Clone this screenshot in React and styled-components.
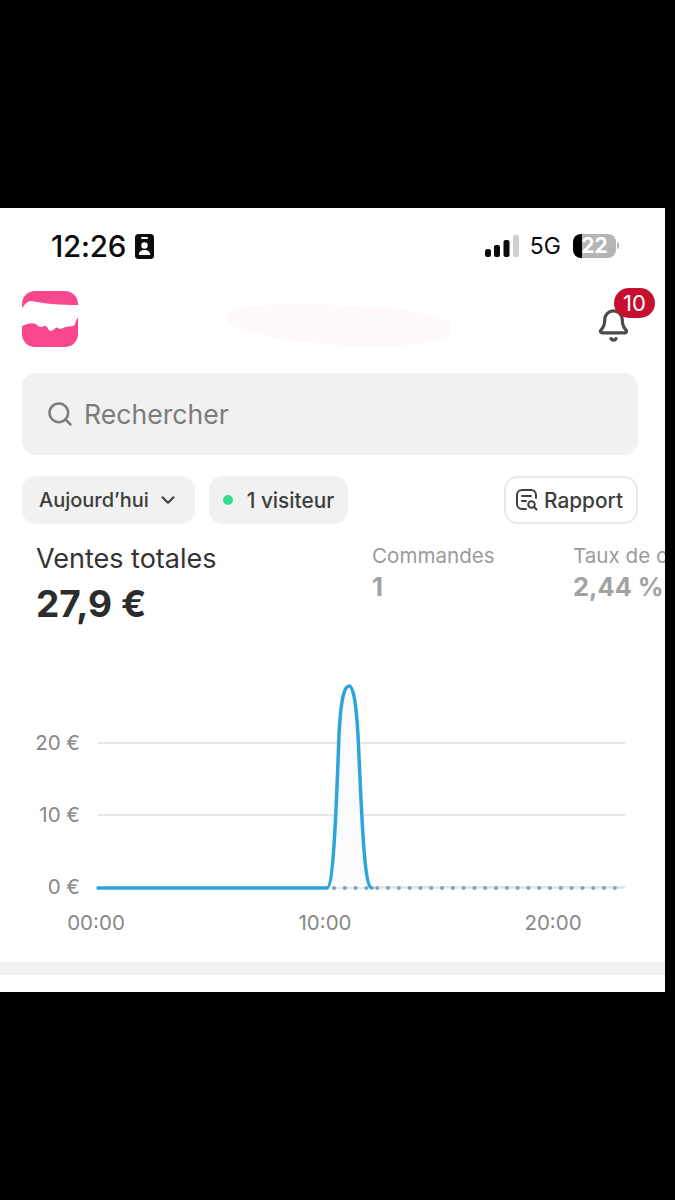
import React from 'react';
import styled, { createGlobalStyle } from 'styled-components';
import { Bell, ChevronDown, Search } from 'lucide-react';

const GlobalStyle = createGlobalStyle`
  html, body {
    margin: 0;
    padding: 0;
    background: #000;
    font-family: Inter, "Liberation Sans", sans-serif;
  }
`;

const Page = styled.div`
  width: 675px;
  height: 1200px;
  padding-top: 208px;
  box-sizing: border-box;
  background: #000;
  overflow: hidden;
`;

const Screen = styled.main`
  width: 665px;
  height: 784px;
  background: #fff;
  overflow: hidden;
`;

const StatusBar = styled.div`
  height: 76px;
  padding: 0 49px 0 51px;
  display: flex;
  align-items: center;
  justify-content: space-between;
  color: #0b0b0b;
`;

const StatusGroup = styled.div`
  display: flex;
  align-items: center;
  gap: ${(p) => p.$gap}px;
`;

const Clock = styled.span`
  font-size: 29.5px;
  font-weight: 500;
  letter-spacing: -0.2px;
`;

const Network = styled.span`
  font-size: 23px;
  font-weight: 400;
  margin-right: 1px;
`;

const Battery = styled.div`
  position: relative;
  width: 43px;
  height: 24px;
  border-radius: 8px;
  background: linear-gradient(to right, #000 9px, #b5b5b5 9px);
  color: #fff;
  font-size: 21px;
  font-weight: 700;
  line-height: 24px;
  text-align: center;

  &::after {
    content: '';
    position: absolute;
    top: 8px;
    right: -3px;
    width: 2px;
    height: 7px;
    border-radius: 0 2px 2px 0;
    background: #b5b5b5;
  }
`;

const Header = styled.header`
  height: 89px;
  padding: 7px 10px 0 22px;
  box-sizing: border-box;
  display: flex;
  align-items: flex-start;
  justify-content: space-between;
`;

const Smudge = styled.div`
  width: 226px;
  height: 40px;
  margin: 14px 0 0 2px;
  background: #fff8f9;
  border-radius: 50% 40% 50% 60%;
  transform: rotate(3deg);
`;

const BellWrap = styled.div`
  position: relative;
  width: 62px;
  height: 52px;
  padding-left: 3px;
  color: #4a4a4a;
  display: flex;
  align-items: flex-end;
  box-sizing: border-box;
`;

const Badge = styled.span`
  position: absolute;
  top: -3px;
  right: 0;
  width: 41px;
  height: 30px;
  border-radius: 15px;
  background: #c5112f;
  color: #fff;
  font-size: 22px;
  line-height: 30px;
  text-align: center;
`;

const SearchBar = styled.div`
  height: 82px;
  margin: 0 27px 0 22px;
  padding-left: 24px;
  border-radius: 14px;
  background: #f1f1f1;
  color: #7b7b7b;
  display: flex;
  align-items: center;
  gap: 10px;
  font-size: 26.6px;
`;

const Filters = styled.div`
  margin: 21px 27px 0 22px;
  display: flex;
  align-items: stretch;
  gap: 14px;
  height: 48px;
`;

const Chip = styled.div`
  padding: 0 ${(p) => p.$right}px 0 ${(p) => p.$left}px;
  border-radius: 14px;
  box-sizing: border-box;
  background: ${(p) => (p.$outlined ? '#fff' : '#f1f1f1')};
  border: ${(p) => (p.$outlined ? '2px solid #e9e9e9' : 'none')};
  margin-left: ${(p) => (p.$push ? 'auto' : 0)};
  color: #3d3d3d;
  font-size: ${(p) => p.$size || 20}px;
  font-weight: 500;
  display: flex;
  align-items: center;
  gap: ${(p) => p.$gap}px;
`;

const Dot = styled.span`
  width: 10px;
  height: 10px;
  border-radius: 50%;
  background: #35dd8b;
`;

const Metrics = styled.section`
  height: 136px;
  padding: 20px 0 0 36px;
  box-sizing: border-box;
  display: flex;
  align-items: flex-start;
`;

const MainMetric = styled.div`
  width: 336px;
  flex: none;
`;

const MainLabel = styled.div`
  font-size: 27px;
  line-height: 30px;
  color: #333;
`;

const MainValue = styled.div`
  margin-top: 8px;
  font-size: 37px;
  line-height: 44px;
  font-weight: 700;
  color: #2c2c2c;
`;

const SideMetric = styled.div`
  width: 201px;
  flex: none;
  white-space: nowrap;
`;

const SideLabel = styled.div`
  font-size: 20.6px;
  line-height: 24px;
  color: #9b9b9b;
`;

const SideValue = styled.div`
  margin-top: 3px;
  font-size: 25.4px;
  line-height: 32px;
  font-weight: 700;
  color: #a2a2a2;
`;

const Chart = styled.svg`
  display: block;
  width: 665px;
  height: 302px;

  text {
    font-family: Inter, "Liberation Sans", sans-serif;
    font-size: 20.500px;
    fill: #878787;
  }
`;

const Divider = styled.div`
  height: 13px;
  background: #f1f1f1;
`;

const IdIcon = () => (
  <svg width="19" height="25" viewBox="0 0 19 25">
    <rect width="19" height="25" rx="3.5" fill="#0b0b0b" />
    <rect x="6" y="3" width="7" height="2" rx="1" fill="#fff" />
    <circle cx="9.5" cy="11.5" r="3.2" fill="#fff" />
    <path d="M3.8 21c0-3.4 2.5-5 5.7-5s5.700 1.600 5.700 5z" fill="#fff" />
  </svg>
);

const SignalIcon = () => (
  <svg width="34" height="22" viewBox="0 0 34 22">
    <rect x="0" y="14" width="6" height="8" rx="2.500" fill="#0b0b0b" />
    <rect x="9" y="10" width="6" height="12" rx="2" fill="#0b0b0b" />
    <rect x="18.500" y="5" width="6" height="17" rx="2" fill="#0b0b0b" />
    <rect x="28" y="0" width="6" height="22" rx="2" fill="#cfcfcf" />
  </svg>
);

const LogoIcon = () => (
  <svg width="56" height="56" viewBox="0 0 56 56">
    <rect width="56" height="56" rx="13" fill="#f9478e" />
    <path
      d="M-2 19c3-2 6-10 12-9 13 3 28 4 47 4v12c-2 1-3 3-4 7-1 3-5 2-9 3-4 1-6 3-8 1-2-2-4 3-7 3-3 0-4-7-7-5-2 2-6 1-8-2-4-2-10 0-16 3z"
      fill="#fff"
    />
  </svg>
);

const ReportIcon = () => (
  <svg width="24" height="24" viewBox="0 0 24 24" fill="none" stroke="#3f3f3f" strokeWidth="2" strokeLinecap="round">
    <path d="M11 21H7a5 5 0 0 1-5-5V7a5 5 0 0 1 5-5h9a5 5 0 0 1 5 5v3" />
    <path d="M7 8h9M7 13h4" />
    <circle cx="16.500" cy="16.500" r="3.300" />
    <path d="M19 19l2.500 2.500" />
  </svg>
);

const gridLines = [
  { y: 83, label: '20 €' },
  { y: 155, label: '10 €' },
  { y: 227, label: '0 €' },
];

const timeLabels = [
  { x: 96, label: '00:00' },
  { x: 325, label: '10:00' },
  { x: 553, label: '20:00' },
];

// the y values here are the page y minus 660, where the chart starts
const peak = 'M327 228C333 228 336 160 339 75C341 35 345 26 349 26C353 26 356 40 358 75C362 160 364 228 372 228';

const SalesChart = () => (
  <Chart viewBox="0 0 665 302">
    {gridLines.map((line) => (
      <g key={line.y}>
        <line x1="98" x2="625" y1={line.y} y2={line.y} stroke="#e6e6e8" strokeWidth="2" />
        <text x="80" y={line.y + 7} textAnchor="end">{line.label}</text>
      </g>
    ))}
    {timeLabels.map((tick) => (
      <text key={tick.x} x={tick.x} y="270" textAnchor="middle">{tick.label}</text>
    ))}
    <path d={peak} fill="#fafbfd" />
    <line x1="334" x2="624" y1="228" y2="228" stroke="#cfe6f0" strokeWidth="1.500" />
    <line x1="334" x2="624" y1="228" y2="228" stroke="#8ba0b2" strokeWidth="4" strokeLinecap="round" strokeDasharray="0.1 10.700" />
    <path d={'M98 228H327' + peak.slice(8)} fill="none" stroke="#2ba5da" strokeWidth="3.500" strokeLinecap="round" />
  </Chart>
);

const App = () => (
  <Page>
    <GlobalStyle />
    <Screen>
      <StatusBar>
        <StatusGroup $gap={9}>
          <Clock>12:26</Clock>
          <IdIcon />
        </StatusGroup>
        <StatusGroup $gap={11}>
          <SignalIcon />
          <Network>5G</Network>
          <Battery>22</Battery>
        </StatusGroup>
      </StatusBar>
      <Header>
        <LogoIcon />
        <Smudge />
        <BellWrap>
          <Bell size={35} strokeWidth={2.200} />
          <Badge>10</Badge>
        </BellWrap>
      </Header>
      <SearchBar>
        <Search size={28} strokeWidth={2.200} color="#7d7d7d" />
        Rechercher
      </SearchBar>
      <Filters>
        <Chip $left={17} $right={16} $gap={8}>
          Aujourd’hui
          <ChevronDown size={22} strokeWidth={2.200} />
        </Chip>
        <Chip $left={14} $right={14} $gap={14} $size={20.800}>
          <Dot />
          1 visiteur
        </Chip>
        <Chip $outlined $push $left={9} $right={13} $gap={5} $size={20.800}>
          <ReportIcon />
          Rapport
        </Chip>
      </Filters>
      <Metrics>
        <MainMetric>
          <MainLabel>Ventes totales</MainLabel>
          <MainValue>27,9 €</MainValue>
        </MainMetric>
        <SideMetric>
          <SideLabel>Commandes</SideLabel>
          <SideValue>1</SideValue>
        </SideMetric>
        <SideMetric>
          <SideLabel>Taux de conversion</SideLabel>
          <SideValue>2,44 %</SideValue>
        </SideMetric>
      </Metrics>
      <SalesChart />
      <Divider />
    </Screen>
  </Page>
);

export default App;
